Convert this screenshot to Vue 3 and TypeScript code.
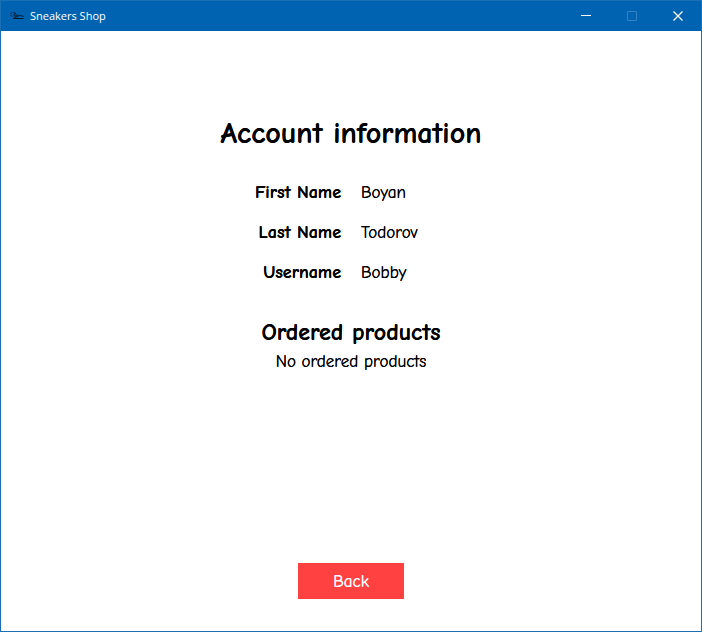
<script setup lang="ts">
interface AccountField {
  label: string
  value: string
}

const fields: AccountField[] = [
  { label: 'First Name', value: 'Boyan' },
  { label: 'Last Name', value: 'Todorov' },
  { label: 'Username', value: 'Bobby' },
]
</script>

<template>
  <div class="window">
    <header class="titlebar">
      <svg class="app-icon" viewBox="0 0 16 16" aria-hidden="true">
        <path d="M1.5 5.5L3 4.5M1.5 7L3.5 8.5M4 4.5L6.5 5L5.5 7.5L4 6.5M6 8.5L8 6.5L9 8L11.5 7.5L14.5 8.5M4 10.5H14.5M5 9.5L9 8.5" />
      </svg>
      <span class="app-name">Sneakers Shop</span>
      <div class="controls">
        <button type="button" class="control" aria-label="Minimize">
          <svg viewBox="0 0 11 11"><path d="M0 4.5H10" /></svg>
        </button>
        <button type="button" class="control" aria-label="Maximize" disabled>
          <svg viewBox="0 0 11 11"><path d="M.5 .5H9.5V9.5H.5Z" /></svg>
        </button>
        <button type="button" class="control" aria-label="Close">
          <svg viewBox="0 0 11 11"><path class="cross" d="M.5 .5L9.5 9.5M9.5 .5L.5 9.5" /></svg>
        </button>
      </div>
    </header>

    <main class="content">
      <h1>Account information</h1>
      <dl class="fields">
        <template v-for="field in fields" :key="field.label">
          <dt>{{ field.label }}</dt>
          <dd>{{ field.value }}</dd>
        </template>
      </dl>
      <h2>Ordered products</h2>
      <p>No ordered products</p>
      <button type="button" class="back">Back</button>
    </main>
  </div>
</template>

<style>
body {
  margin: 0;
}
</style>

<style scoped>
.window {
  box-sizing: border-box;
  min-height: 100vh;
  display: flex;
  flex-direction: column;
  border: 1px solid #1a6fb5;
  background: #fff;
  color: #000;
  font-family: "Comic Sans MS", "Comic Neue", Lato, sans-serif;
  font-size: 17px;
  line-height: 24px;
}

.titlebar {
  display: flex;
  align-items: center;
  height: 30px;
  padding-left: 8px;
  background: #0063b1;
  color: #fff;
  font-family: "Segoe UI", "Open Sans", sans-serif;
  font-size: 11px;
}

.app-icon {
  width: 16px;
  height: 16px;
  margin-right: 5px;
  fill: none;
  stroke: #06192b;
}

.controls {
  display: flex;
  align-self: stretch;
  margin-left: auto;
}

.control {
  display: flex;
  align-items: center;
  justify-content: center;
  width: 46px;
  padding: 0;
  border: 0;
  background: none;
  color: #fff;
}

.control:disabled {
  color: #3382c1;
}

.control svg {
  width: 11px;
  height: 11px;
  fill: none;
  stroke: currentColor;
}

.cross {
  stroke-width: 1.3;
}

.content {
  flex: 1;
  display: flex;
  flex-direction: column;
  align-items: center;
  padding: 81px 20px 32px;
  text-shadow: 0 0 0 currentColor;
}

h1 {
  margin: 0;
  font-size: 30px;
  line-height: 44px;
}

.fields {
  display: grid;
  grid-template-columns: 1fr 1fr;
  gap: 16px 20px;
  width: 100%;
  margin: 25px 0 29px;
}

dt {
  font-size: 18px;
  font-weight: 700;
  text-align: right;
}

dd {
  margin: 0;
}

h2 {
  margin: 0;
  font-size: 24px;
  line-height: 36px;
}

p {
  margin: 0;
}

.back {
  width: 106px;
  height: 36px;
  margin-top: auto;
  padding: 2px 0 0;
  border: 0;
  background: #ff4142;
  color: #fff;
  font: inherit;
  text-shadow: inherit;
}
</style>
